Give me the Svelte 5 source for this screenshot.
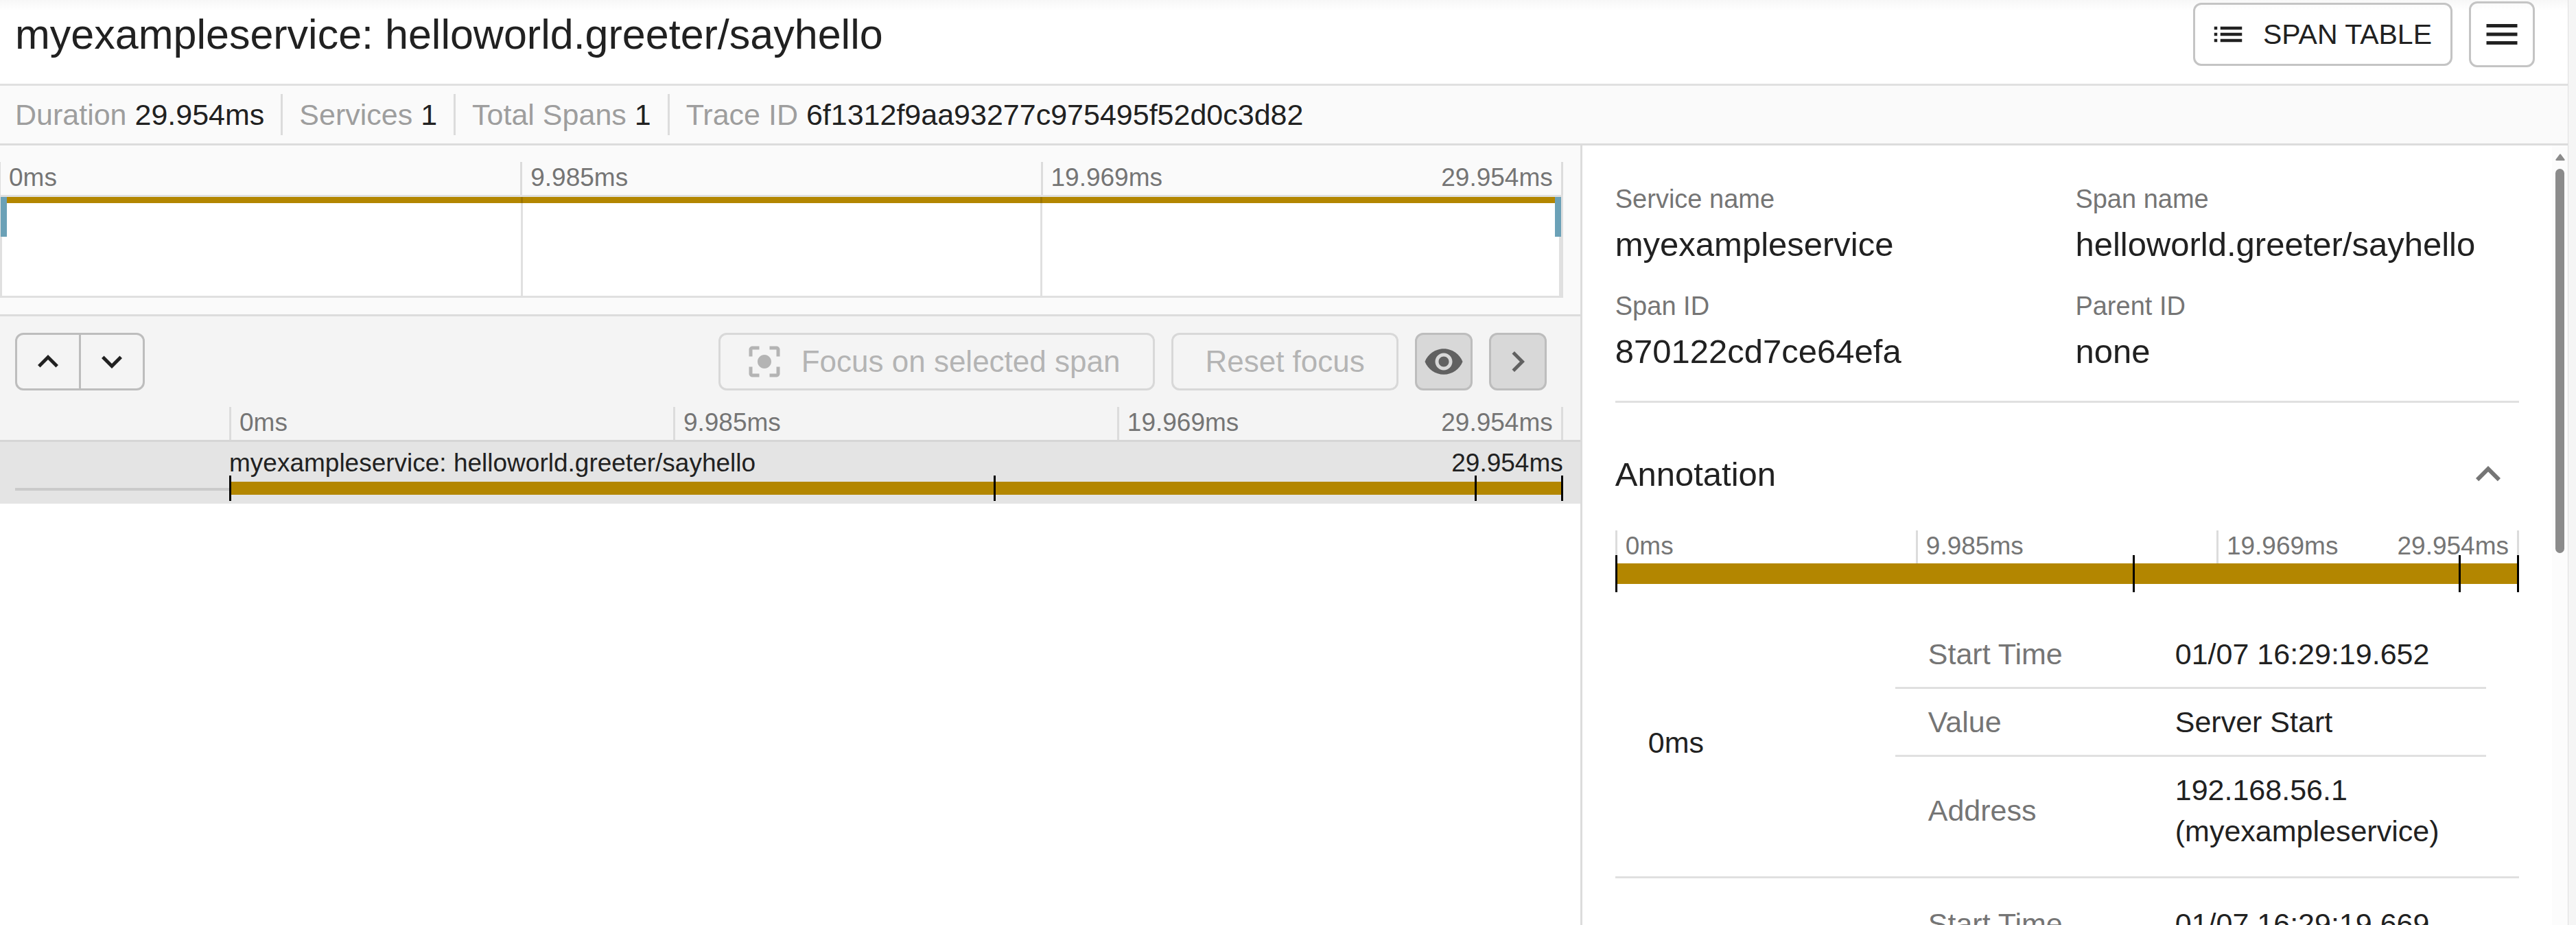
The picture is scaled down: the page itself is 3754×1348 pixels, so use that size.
<script>
  const ticks = ['0ms', '9.985ms', '19.969ms'];
  const total = '29.954ms';
  const markers = [0, 0.574, 0.935, 1];

  const stats = [
    ['Duration', '29.954ms'],
    ['Services', '1'],
    ['Total Spans', '1'],
    ['Trace ID', '6f1312f9aa93277c975495f52d0c3d82'],
  ];

  const details = [
    ['Service name', 'myexampleservice'],
    ['Span name', 'helloworld.greeter/sayhello'],
    ['Span ID', '870122cd7ce64efa'],
    ['Parent ID', 'none'],
  ];

  const annotations = [
    {
      offset: '0ms',
      rows: [
        ['Start Time', '01/07 16:29:19.652'],
        ['Value', 'Server Start'],
        ['Address', '192.168.56.1 (myexampleservice)'],
      ],
    },
    {
      offset: '17.194ms',
      rows: [
        ['Start Time', '01/07 16:29:19.669'],
        ['Value', 'Server Receive'],
        ['Address', '192.168.56.1 (myexampleservice)'],
      ],
    },
  ];
</script>

{#snippet icon(d)}
  <svg class="icon" viewBox="0 0 24 24" aria-hidden="true"><path {d} /></svg>
{/snippet}

{#snippet scale()}
  <div class="scale">
    {#each ticks as tick, i}
      <div class="tick">
        <span>{tick}</span>
        {#if i === ticks.length - 1}<span>{total}</span>{/if}
      </div>
    {/each}
  </div>
{/snippet}

{#snippet marks()}
  {#each markers as m}
    <i class="mark" style:--at={m}></i>
  {/each}
{/snippet}

<div class="page">
  <header class="header">
    <h1>myexampleservice: helloworld.greeter/sayhello</h1>
    <div class="actions">
      <button class="btn table-btn" type="button">
        {@render icon('M3 13h2v-2H3v2zm0 4h2v-2H3v2zm0-8h2V7H3v2zm4 4h14v-2H7v2zm0 4h14v-2H7v2zM7 7v2h14V7H7z')}
        SPAN TABLE
      </button>
      <button class="btn menu-btn" type="button" aria-label="Menu">
        {@render icon('M3 18h18v-2H3v2zm0-5h18v-2H3v2zm0-7v2h18V6H3z')}
      </button>
    </div>
  </header>

  <div class="stats">
    {#each stats as [label, value]}
      <div class="stat"><span class="muted">{label}</span> {value}</div>
    {/each}
  </div>

  <main class="body">
    <section class="trace">
      <div class="minimap">
        {@render scale()}
        <div class="map">
          <div class="map-bar"></div>
          <div class="map-grid"><i></i><i></i><i></i></div>
          <i class="handle start"></i>
          <i class="handle end"></i>
        </div>
      </div>

      <div class="timeline-head">
        <div class="toolbar">
          <div class="group">
            <button class="btn" type="button" aria-label="Previous span">
              {@render icon('M7.41 15.41L12 10.83l4.59 4.58L18 14l-6-6-6 6z')}
            </button>
            <button class="btn" type="button" aria-label="Next span">
              {@render icon('M7.41 8.59L12 13.17l4.59-4.58L18 10l-6 6-6-6z')}
            </button>
          </div>
          <div class="tools">
            <button class="btn focus" type="button" disabled>
              {@render icon('M12 8c-2.21 0-4 1.79-4 4s1.79 4 4 4 4-1.79 4-4-1.79-4-4-4zm-7 7H3v4c0 1.1.9 2 2 2h4v-2H5v-4zM5 5h4V3H5c-1.1 0-2 .9-2 2v4h2V5zm14-2h-4v2h4v4h2V5c0-1.1-.9-2-2-2zm0 16h-4v2h4c1.1 0 2-.9 2-2v-4h-2v4z')}
              Focus on selected span
            </button>
            <button class="btn reset" type="button" disabled>Reset focus</button>
            <button class="btn toggle" type="button" aria-label="Toggle minimap">
              {@render icon('M12 4.5C7 4.5 2.73 7.61 1 12c1.73 4.39 6 7.5 11 7.5s9.27-3.11 11-7.5c-1.73-4.39-6-7.5-11-7.5zM12 17c-2.76 0-5-2.24-5-5s2.24-5 5-5 5 2.24 5 5-2.24 5-5 5zm0-8c-1.66 0-3 1.34-3 3s1.34 3 3 3 3-1.34 3-3-1.34-3-3-3z')}
            </button>
            <button class="btn toggle" type="button" aria-label="Toggle span details">
              {@render icon('M8.59 16.59L13.17 12 8.59 7.41 10 6l6 6-6 6-1.41-1.41z')}
            </button>
          </div>
        </div>
        <div class="indent">{@render scale()}</div>
      </div>

      <div class="span-row">
        <div class="lead"></div>
        <div class="span">
          <div class="span-text">
            <span>myexampleservice: helloworld.greeter/sayhello</span>
            <span>{total}</span>
          </div>
          <div class="bar">{@render marks()}</div>
        </div>
      </div>
    </section>

    <aside class="side">
      <div class="detail">
        <dl>
          {#each details as [label, value]}
            <div>
              <dt>{label}</dt>
              <dd>{value}</dd>
            </div>
          {/each}
        </dl>
        <div class="section-head">
          <h2>Annotation</h2>
          <button class="collapse" type="button" aria-label="Collapse annotation">
            {@render icon('M12 8l-6 6 1.41 1.41L12 10.83l4.59 4.58L18 14z')}
          </button>
        </div>
        {@render scale()}
        <div class="bar big">{@render marks()}</div>
        <table class="outer">
          <tbody>
            {#each annotations as a}
              <tr>
                <th class="offset" scope="row">{a.offset}</th>
                <td class="nest">
                  <table class="inner">
                    <tbody>
                      {#each a.rows as [label, value]}
                        <tr>
                          <th scope="row">{label}</th>
                          <td>{value}</td>
                        </tr>
                      {/each}
                    </tbody>
                  </table>
                </td>
              </tr>
            {/each}
          </tbody>
        </table>
      </div>
      <div class="scrollbar">
        <svg class="arrow" viewBox="0 0 14 10" aria-hidden="true"><path d="M6 1Q7 -0.6 8 1L13.6 8.4Q14 10 12.6 10H1.4Q0 10 .4 8.4z" /></svg>
        <div class="thumb"></div>
      </div>
    </aside>
  </main>
</div>

<style>
  :global(body) {
    background: #f5f5f5;
  }
  .page {
    box-sizing: border-box;
    height: 100vh;
    margin-right: 11px;
    border-right: 1px solid #e0e0e0;
    display: flex;
    flex-direction: column;
    overflow: hidden;
    background: #fff;
    color: #212121;
    font-family: "Liberation Sans", Arial, sans-serif;
    font-size: 43px;
    line-height: 60px;
  }
  .page :global(*) {
    box-sizing: border-box;
  }
  h1,
  h2,
  dl,
  dd {
    margin: 0;
    font-weight: 400;
  }
  th {
    font-weight: 400;
    text-align: left;
  }
  .icon {
    display: block;
    flex: none;
    width: 60px;
    height: 60px;
    fill: currentColor;
  }
  .btn {
    display: flex;
    align-items: center;
    justify-content: center;
    height: 84px;
    padding: 0;
    border: 3px solid #bdbdbd;
    border-radius: 12px;
    background: transparent;
    color: inherit;
    font-family: inherit;
    font-size: 44px;
    line-height: 60px;
    white-space: nowrap;
  }

  .header {
    display: flex;
    align-items: center;
    justify-content: space-between;
    padding: 2px 48px 24px 22px;
    border-bottom: 3px solid #e0e0e0;
    background: linear-gradient(#f7f7f7, #fff 16px);
  }
  h1 {
    font-size: 61px;
    line-height: 96px;
  }
  .actions {
    display: flex;
    align-items: center;
    gap: 24px;
  }
  .actions .btn {
    border-color: #c4c4c4;
  }
  .table-btn {
    height: 92px;
    padding: 0 27px 0 21px;
    gap: 24px;
  }
  .actions .table-btn {
    font-size: 41px;
  }
  .table-btn .icon,
  .table-btn :global(.icon) {
    width: 54px;
    height: 54px;
  }
  .menu-btn {
    width: 96px;
    height: 96px;
  }

  .stats {
    display: flex;
    padding: 12px 22px;
    border-bottom: 3px solid #dcdcdc;
    background: #fafafa;
  }
  .stat + .stat {
    margin-left: 24px;
    padding-left: 24px;
    border-left: 3px solid #dcdcdc;
  }
  .muted {
    color: #9e9e9e;
  }

  .body {
    flex: 1;
    min-height: 0;
    display: grid;
    grid-template-columns: minmax(0, 8fr) minmax(0, 5fr);
  }

  .scale {
    display: grid;
    grid-template-columns: repeat(3, 1fr);
    height: 48px;
    border-right: 3px solid #dcdcdc;
    color: #757575;
    font-size: 37px;
    line-height: 46px;
  }
  .tick {
    display: flex;
    justify-content: space-between;
    padding: 0 12px;
    border-left: 3px solid #dcdcdc;
  }

  .minimap {
    padding: 24px 25px 24px 0;
    border-bottom: 3px solid #dcdcdc;
    background: #fafafa;
  }
  .minimap .tick:first-child,
  .minimap :global(.tick:first-child) {
    border-left-width: 1px;
  }
  .map {
    position: relative;
    height: 150px;
    border: 3px solid #e0e0e0;
    background: #fff;
  }
  .map-bar {
    position: absolute;
    inset: 0 0 auto 0;
    height: 9px;
    background: #b38600;
  }
  .map-grid {
    position: relative;
    display: grid;
    grid-template-columns: repeat(3, 1fr);
    height: 100%;
    border-right: 3px solid #e0e0e0;
  }
  .map-grid i + i {
    border-left: 3px solid rgba(0, 0, 0, 0.12);
  }
  .handle {
    position: absolute;
    top: 0;
    width: 9px;
    height: 58px;
    background: #6ba1b7;
  }
  .handle.start {
    left: -2px;
  }
  .handle.end {
    right: 0;
  }

  .timeline-head {
    padding: 24px 25px 0 22px;
    border-bottom: 3px solid #d6d6d6;
    background: #f4f4f4;
  }
  .toolbar {
    display: flex;
    justify-content: space-between;
    padding: 0 24px 24px 0;
  }
  .group {
    display: flex;
  }
  .group .btn {
    width: 96px;
    border-radius: 12px 0 0 12px;
  }
  .group .btn + .btn {
    margin-left: -3px;
    border-radius: 0 12px 12px 0;
  }
  .tools {
    display: flex;
    gap: 24px;
  }
  .tools .btn:disabled {
    border-color: #d8d8d8;
    color: #b4b4b4;
  }
  .tools .focus {
    gap: 24px;
    padding: 0 48px 0 34px;
  }
  .tools .reset {
    padding: 0 46px;
  }
  .tools .toggle {
    width: 84px;
    background: #d8d8d8;
    color: #616161;
  }
  .indent {
    margin-left: 312px;
  }

  .span-row {
    display: flex;
    height: 90px;
    padding: 0 25px 0 22px;
    background: #e4e4e4;
  }
  .lead {
    width: 312px;
    height: 4px;
    margin-top: 67px;
    background: #cacaca;
  }
  .span {
    flex: 1;
  }
  .span-text {
    display: flex;
    justify-content: space-between;
    height: 58px;
    font-size: 37px;
    line-height: 62px;
  }
  .bar {
    position: relative;
    height: 19px;
    background: #b38600;
  }
  .mark {
    position: absolute;
    top: -9px;
    bottom: -9px;
    left: calc(var(--at) * (100% - 3px));
    width: 3px;
    background: #000;
  }

  .side {
    display: flex;
    min-height: 0;
    overflow: hidden;
    border-left: 3px solid #dcdcdc;
  }
  .detail {
    flex: 1;
    padding: 48px;
    overflow-y: auto;
    scrollbar-width: none;
  }
  dl {
    display: grid;
    grid-template-columns: 1fr 1fr;
    gap: 24px;
    padding-bottom: 36px;
    border-bottom: 3px solid #e0e0e0;
  }
  dt {
    color: #757575;
    font-size: 38px;
  }
  dd {
    font-size: 49px;
    line-height: 72px;
  }
  .section-head {
    display: flex;
    align-items: center;
    justify-content: space-between;
    height: 96px;
    margin: 56px 0 34px;
  }
  h2 {
    font-size: 49px;
  }
  .collapse {
    padding: 9px;
    border: 0;
    background: none;
    color: #757575;
  }
  .collapse .icon,
  .collapse :global(.icon) {
    width: 72px;
    height: 72px;
  }
  .bar.big {
    height: 30px;
  }
  .big .mark,
  .big :global(.mark) {
    top: -12px;
    bottom: -12px;
  }

  table {
    width: 100%;
    border-collapse: separate;
    border-spacing: 0;
    table-layout: fixed;
  }
  .outer {
    margin-top: 36px;
  }
  .offset,
  .nest {
    padding: 18px 48px;
    border-bottom: 3px solid #e0e0e0;
  }
  .offset {
    width: 360px;
  }
  .inner th,
  .inner td {
    padding: 18px 48px;
    border-bottom: 3px solid #e0e0e0;
  }
  .inner td {
    padding-right: 24px;
  }
  .inner th {
    width: 360px;
    color: #757575;
  }
  .inner tr:last-child > * {
    border-bottom: 0;
  }

  .scrollbar {
    display: flex;
    flex-direction: column;
    align-items: center;
    width: 23px;
    padding-top: 12px;
    background: #fcfcfc;
  }
  .arrow {
    flex: none;
    width: 14px;
    height: 10px;
    fill: #8b8b8b;
  }
  .thumb {
    flex: none;
    width: 13px;
    height: 560px;
    margin-top: 12px;
    border-radius: 7px;
    background: #8b8b8b;
  }
</style>
